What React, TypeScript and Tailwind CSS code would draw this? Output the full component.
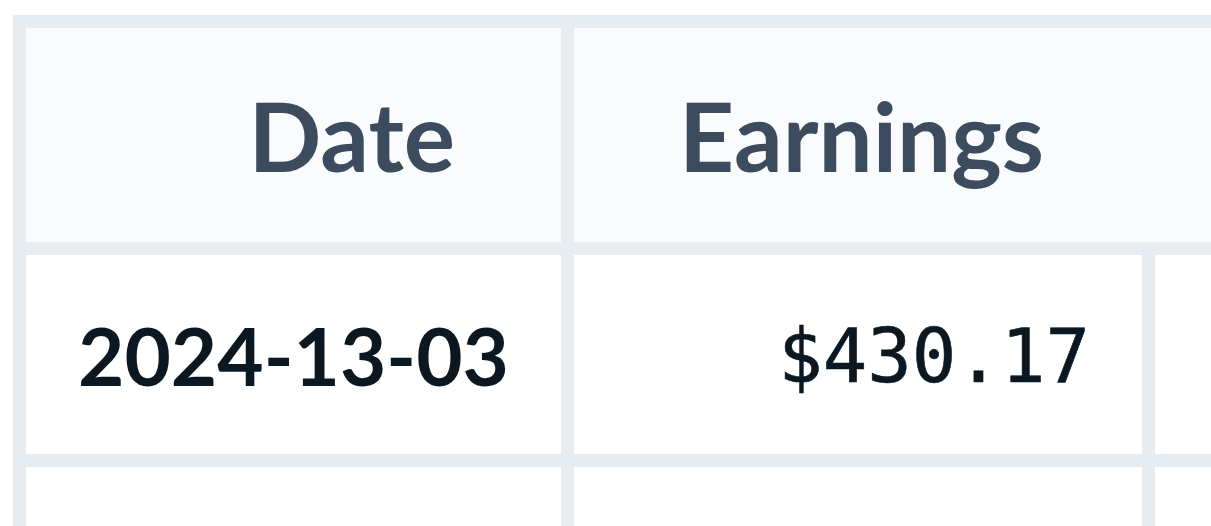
import React from "react";

const rows = [
  { date: "2024-13-03", earnings: "$430.17" },
  { date: "", earnings: "" },
];

export default function App() {
  return (
    <div className="h-[526px] w-[1211px] overflow-hidden bg-white pl-[13px] pt-[15px]">
      <div className="grid w-max grid-cols-[535px_568px_400px] gap-[13px] bg-[#e7ecf0] p-[13px] font-['Lato',sans-serif]">
        <div className="flex h-[214px] items-center justify-end bg-[#f9fbfd] pr-[106px] text-[96px] font-bold text-[#3d4b5e]">
          Date
        </div>
        <div className="col-span-2 flex h-[214px] items-center bg-[#f9fbfd] pl-[105px] text-[96px] font-bold text-[#3d4b5e]">
          Earnings
        </div>

        {rows.map((r, i) => (
          <React.Fragment key={i}>
            <div className="flex h-[199px] items-center justify-center bg-white text-[80px] font-bold text-[#0c1821]">
              {r.date}
            </div>
            <div className="flex h-[199px] items-center justify-end bg-white pr-[52px] pt-[3px] font-['DejaVu_Sans_Mono',monospace] text-[74px] text-[#0c1821] [-webkit-text-stroke:0.6px_#0c1821]">
              {r.earnings}
            </div>
            <div className="h-[199px] bg-white" />
          </React.Fragment>
        ))}
      </div>
    </div>
  );
}
